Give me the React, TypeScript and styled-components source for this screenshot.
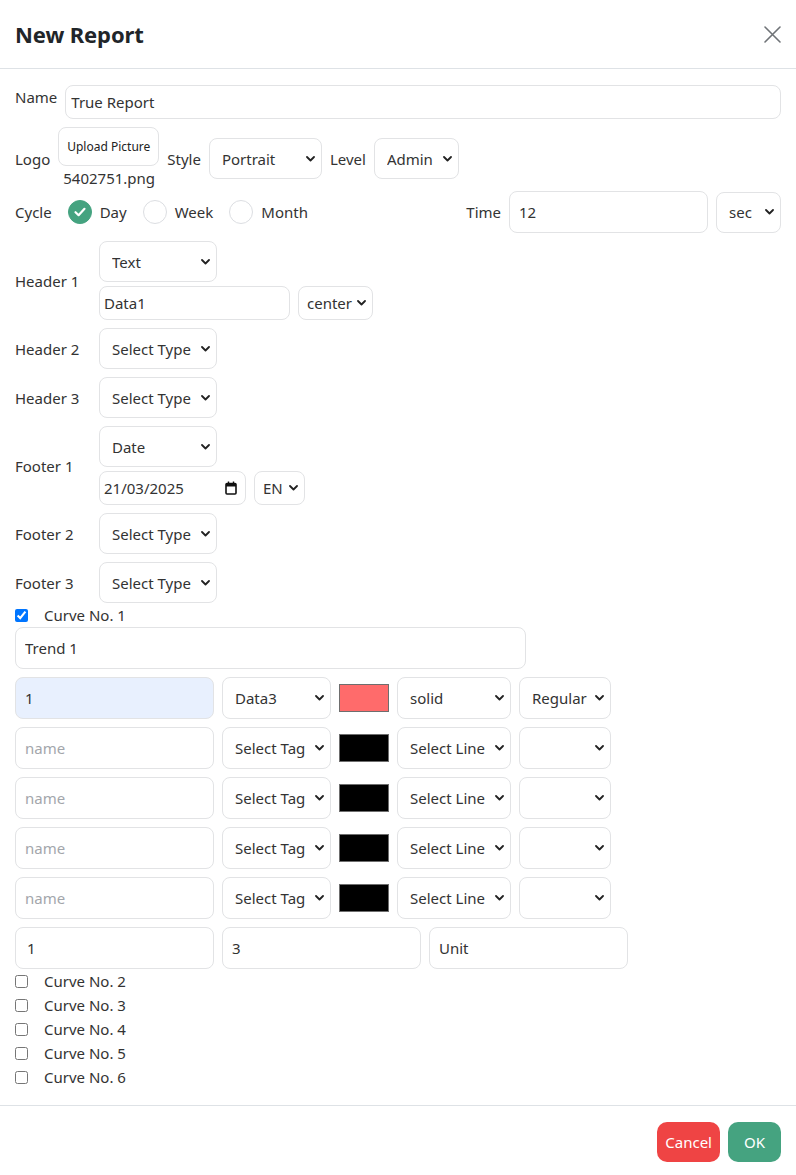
import React from "react";
import styled, { createGlobalStyle } from "styled-components";

const GlobalStyle = createGlobalStyle`
  html, body { margin: 0; padding: 0; background: #fff; }
  body { font-family: "Noto Sans", "Open Sans", sans-serif; color: #333; }
  * { box-sizing: border-box; }
`;

const Modal = styled.div`
  width: 796px;
  min-height: 1175px;
  background: #fff;
  display: flex;
  flex-direction: column;
`;

const Header = styled.div`
  height: 69px;
  border-bottom: 1px solid #dee2e6;
  display: flex;
  align-items: center;
  justify-content: space-between;
  padding: 0 15px 1px 15px;
`;

const Title = styled.h2`
  margin: 0;
  font-size: 22px;
  font-weight: 700;
  color: #212529;
  letter-spacing: -0.1px;
`;

const CloseButton = styled.button`
  border: none;
  background: transparent;
  padding: 0;
  width: 18px;
  height: 18px;
  display: flex;
  align-items: center;
  justify-content: center;
  cursor: pointer;
  margin-top: 2px;
`;

const Body = styled.div`
  padding: 16px 15px 16px 15px;
  display: flex;
  flex-direction: column;
  border-bottom: 1px solid #dee2e6;
`;

const Row = styled.div<{ $mb?: number; $align?: string; $justify?: string }>`
  display: flex;
  align-items: ${(p) => p.$align ?? "center"};
  justify-content: ${(p) => p.$justify ?? "flex-start"};
  gap: 8px;
  margin-bottom: ${(p) => p.$mb ?? 0}px;
`;

const Group = styled.div<{ $gap?: number }>`
  display: flex;
  align-items: center;
  gap: ${(p) => p.$gap ?? 8}px;
`;

const Stack = styled.div<{ $gap?: number }>`
  display: flex;
  flex-direction: column;
  align-items: flex-start;
  gap: ${(p) => p.$gap ?? 4}px;
`;

const Label = styled.label<{ $w?: number }>`
  font-size: 15px;
  line-height: 24px;
  color: #333;
  flex-shrink: 0;
  ${(p) => (p.$w ? `width: ${p.$w}px;` : "")}
`;

const TextInput = styled.input<{ $w?: number; $h?: number; $pad?: number; $fill?: boolean; $auto?: boolean }>`
  ${(p) => (p.$fill ? "flex: 1;" : `width: ${p.$w ?? 199}px;`)}
  height: ${(p) => p.$h ?? 42}px;
  border: 1px solid #e2e3e5;
  border-radius: 8px;
  padding: 0 ${(p) => p.$pad ?? 8}px;
  font-family: inherit;
  font-size: 15px;
  color: #333;
  background: ${(p) => (p.$auto ? "#e8f0fe" : "#fff")};
  outline: none;
  &::placeholder { color: #a3a6ab; }
`;

const SelectWrap = styled.div<{ $w: number; $h?: number }>`
  position: relative;
  width: ${(p) => p.$w}px;
  height: ${(p) => p.$h ?? 41}px;
  flex-shrink: 0;
`;

const Select = styled.select<{ $pl?: number }>`
  appearance: none;
  -webkit-appearance: none;
  width: 100%;
  height: 100%;
  border: 1px solid #e2e3e5;
  border-radius: 8px;
  background: #fff;
  padding: 0 17px 0 ${(p) => p.$pl ?? 12}px;
  font-family: inherit;
  font-size: 15px;
  color: #333;
  outline: none;
`;

const ChevronIcon = styled.svg`
  position: absolute;
  right: 7px;
  top: 50%;
  margin-top: -3px;
  pointer-events: none;
`;

const UploadButton = styled.button`
  width: 101px;
  height: 39px;
  border: 1px solid #e2e3e5;
  border-radius: 8px;
  background: #fff;
  font-family: inherit;
  font-size: 12px;
  color: #222;
  padding: 0;
`;

const FileName = styled.span`
  font-size: 15px;
  line-height: 24px;
  color: #333;
  padding-left: 5px;
`;

const RadioItem = styled.label`
  display: flex;
  align-items: center;
  gap: 8px;
  font-size: 15px;
  line-height: 24px;
  color: #333;
`;

const RadioCircle = styled.span<{ $checked?: boolean }>`
  width: 24px;
  height: 24px;
  border-radius: 50%;
  border: 1px solid ${(p) => (p.$checked ? "#45a380" : "#dcdee2")};
  background: ${(p) => (p.$checked ? "#45a380" : "#fff")};
  display: flex;
  align-items: center;
  justify-content: center;
`;

const DateWrap = styled.div`
  position: relative;
  width: 147px;
  height: 34px;
`;

const CalendarIcon = styled.svg`
  position: absolute;
  right: 9px;
  top: 10px;
  pointer-events: none;
`;

const Swatch = styled.div<{ $color: string }>`
  width: 50px;
  height: 28px;
  background: ${(p) => p.$color};
  border: 1px solid #6e6e6e;
  flex-shrink: 0;
`;

const CheckRow = styled.label`
  display: flex;
  align-items: center;
  gap: 16px;
  height: 24px;
  font-size: 15px;
  color: #333;
`;

const CheckBox = styled.input`
  margin: 0;
  width: 13px;
  height: 13px;
  accent-color: #0075ff;
`;

const Footer = styled.div`
  display: flex;
  justify-content: flex-end;
  gap: 8px;
  padding: 16px 15px 13px;
`;

const ActionButton = styled.button<{ $variant: "danger" | "ok" }>`
  height: 40px;
  border: none;
  border-radius: 10px;
  padding: 0 ${(p) => (p.$variant === "ok" ? 16 : 8)}px;
  font-family: inherit;
  font-size: 15px;
  color: #fff;
  background: ${(p) => (p.$variant === "danger" ? "#ef4444" : "#45a380")};
`;

const Chevron = () => (
  <ChevronIcon width="9" height="6" viewBox="0 0 9 6">
    <path d="M1 1 L4.5 4.5 L8 1" fill="none" stroke="#222" strokeWidth="1.8" strokeLinecap="round" strokeLinejoin="round" />
  </ChevronIcon>
);

const Dropdown: React.FC<{ w: number; h?: number; value: string; options?: string[]; pl?: number }> = ({ w, h, value, options, pl }) => (
  <SelectWrap $w={w} $h={h}>
    <Select $pl={pl} defaultValue={value}>
      {(options ?? [value]).map((o) => (
        <option key={o} value={o}>
          {o}
        </option>
      ))}
    </Select>
    <Chevron />
  </SelectWrap>
);

const Radio: React.FC<{ label: string; checked?: boolean }> = ({ label, checked }) => (
  <RadioItem>
    <RadioCircle $checked={checked}>
      {checked && (
        <svg width="14" height="14" viewBox="0 0 14 14">
          <path d="M2.5 7.2 L5.6 10.2 L11.5 3.8" fill="none" stroke="#fff" strokeWidth="2.2" strokeLinecap="round" strokeLinejoin="round" />
        </svg>
      )}
    </RadioCircle>
    {label}
  </RadioItem>
);

const HeaderLine: React.FC<{ label: string; children: React.ReactNode; mb?: number }> = ({ label, children, mb }) => (
  <Row $mb={mb}>
    <Label $w={76}>{label}</Label>
    {children}
  </Row>
);

const CurveRow: React.FC<{ name?: string; tag: string; color: string; line: string; weight: string; mb?: number }> = ({
  name,
  tag,
  color,
  line,
  weight,
  mb,
}) => (
  <Row $mb={mb}>
    <TextInput $w={199} $h={42} $pad={9} defaultValue={name} placeholder="name" $auto={!!name} />
    <Dropdown w={109} h={42} value={tag} />
    <Swatch $color={color} />
    <Dropdown w={114} h={42} value={line} />
    <Dropdown w={92} h={42} value={weight} />
  </Row>
);

export default function App() {
  return (
    <>
      <GlobalStyle />
      <Modal>
        <Header>
          <Title>New Report</Title>
          <CloseButton aria-label="close">
            <svg width="17" height="17" viewBox="0 0 17 17">
              <path d="M1 1 L16 16 M16 1 L1 16" stroke="#6f7377" strokeWidth="1.6" strokeLinecap="round" />
            </svg>
          </CloseButton>
        </Header>
        <Body>
          <Row $mb={8} $align="flex-start">
            <Label>Name</Label>
            <TextInput $fill $h={34} $pad={5} defaultValue="True Report" />
          </Row>

          <Row $mb={1}>
            <Label>Logo</Label>
            <Stack $gap={0}>
              <UploadButton>Upload Picture</UploadButton>
              <FileName>5402751.png</FileName>
            </Stack>
            <Label>Style</Label>
            <Dropdown w={113} value="Portrait" />
            <Label>Level</Label>
            <Dropdown w={85} value="Admin" />
          </Row>

          <Row $mb={8} $justify="space-between">
            <Group $gap={16}>
              <Label>Cycle</Label>
              <Group $gap={16}>
                <Radio label="Day" checked />
                <Radio label="Week" />
                <Radio label="Month" />
              </Group>
            </Group>
            <Group>
              <Label>Time</Label>
              <TextInput $w={199} $h={42} $pad={9} defaultValue="12" />
              <Dropdown w={65} value="sec" />
            </Group>
          </Row>

          <HeaderLine label="Header 1" mb={8}>
            <Stack $gap={4}>
              <Dropdown w={118} value="Text" />
              <Group>
                <TextInput $w={191} $h={34} $pad={4} defaultValue="Data1" />
                <Dropdown w={75} h={34} value="center" pl={8} />
              </Group>
            </Stack>
          </HeaderLine>
          <HeaderLine label="Header 2" mb={8}>
            <Dropdown w={118} value="Select Type" />
          </HeaderLine>
          <HeaderLine label="Header 3" mb={8}>
            <Dropdown w={118} value="Select Type" />
          </HeaderLine>
          <HeaderLine label="Footer 1" mb={8}>
            <Stack $gap={4}>
              <Dropdown w={118} value="Date" />
              <Group>
                <DateWrap>
                  <TextInput $w={147} $h={34} $pad={4} defaultValue="21/03/2025" />
                  <CalendarIcon width="12" height="14" viewBox="0 0 12 14">
                    <rect x="1" y="2.5" width="10" height="10.5" rx="1" fill="none" stroke="#111" strokeWidth="1.6" />
                    <rect x="1" y="2.5" width="10" height="3" fill="#111" />
                    <path d="M3.5 0.5 V3 M8.5 0.5 V3" stroke="#111" strokeWidth="1.4" />
                  </CalendarIcon>
                </DateWrap>
                <Dropdown w={51} h={34} value="EN" pl={8} />
              </Group>
            </Stack>
          </HeaderLine>
          <HeaderLine label="Footer 2" mb={8}>
            <Dropdown w={118} value="Select Type" />
          </HeaderLine>
          <HeaderLine label="Footer 3">
            <Dropdown w={118} value="Select Type" />
          </HeaderLine>

          <CheckRow>
            <CheckBox type="checkbox" defaultChecked />
            Curve No. 1
          </CheckRow>
          <Row $mb={8}>
            <TextInput $w={511} $h={42} $pad={9} defaultValue="Trend 1" />
          </Row>
          <CurveRow name="1" tag="Data3" color="#ff6b6b" line="solid" weight="Regular" mb={8} />
          <CurveRow tag="Select Tag" color="#000" line="Select Line" weight="" mb={8} />
          <CurveRow tag="Select Tag" color="#000" line="Select Line" weight="" mb={8} />
          <CurveRow tag="Select Tag" color="#000" line="Select Line" weight="" mb={8} />
          <CurveRow tag="Select Tag" color="#000" line="Select Line" weight="" mb={8} />
          <Row>
            <TextInput $w={199} $h={42} $pad={11} defaultValue="1" />
            <TextInput $w={199} $h={42} $pad={9} defaultValue="3" />
            <TextInput $w={199} $h={42} $pad={9} defaultValue="Unit" />
          </Row>
          {[2, 3, 4, 5, 6].map((n) => (
            <CheckRow key={n}>
              <CheckBox type="checkbox" />
              Curve No. {n}
            </CheckRow>
          ))}
        </Body>
        <Footer>
          <ActionButton $variant="danger">Cancel</ActionButton>
          <ActionButton $variant="ok">OK</ActionButton>
        </Footer>
      </Modal>
    </>
  );
}
